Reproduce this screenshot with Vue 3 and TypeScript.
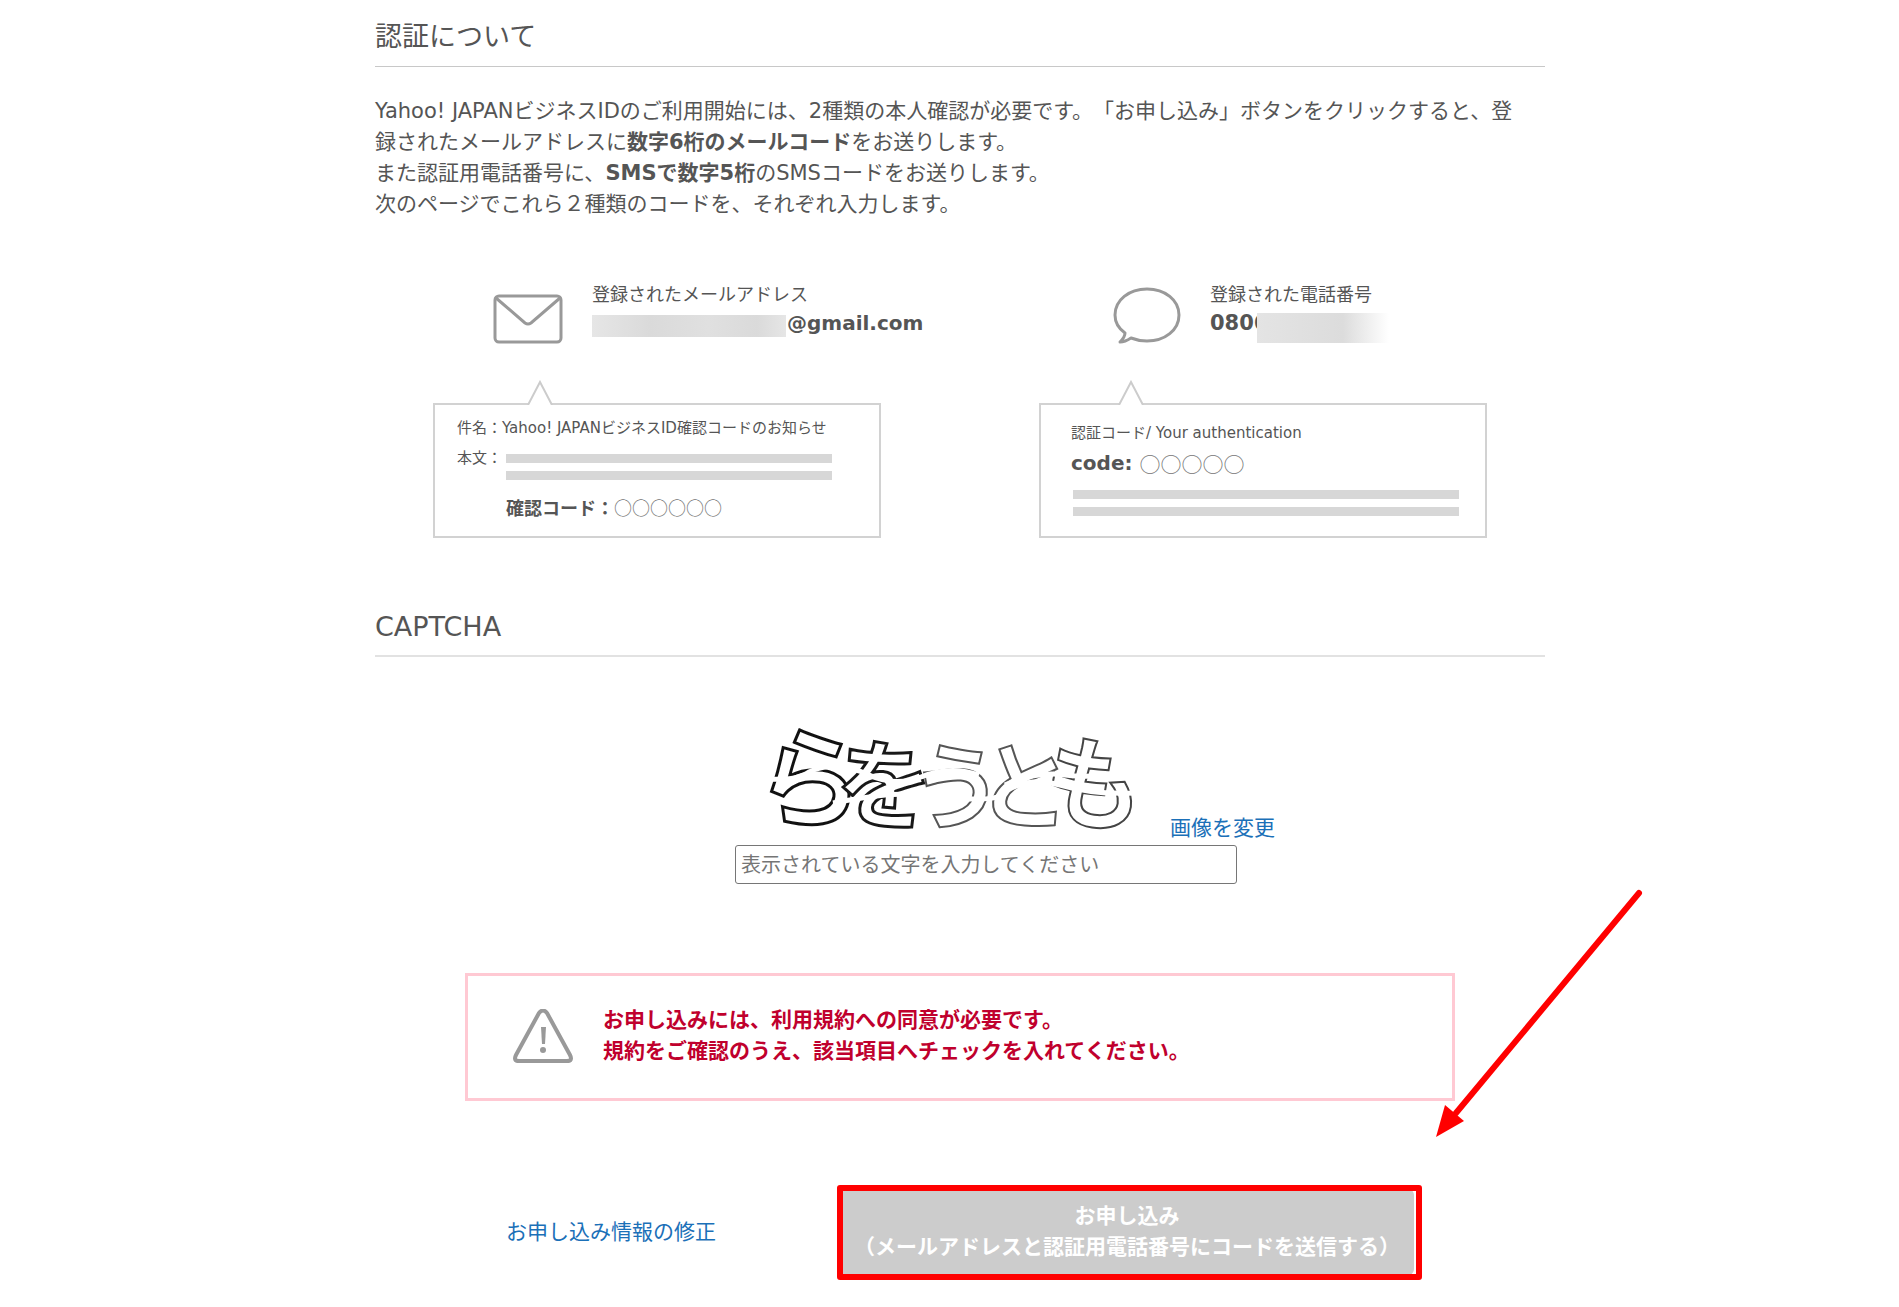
<script setup lang="ts">
import { ref } from 'vue'

const answer = ref('')
const emailDomain = '@gmail.com'
const phonePrefix = '080'
const emailDigits = 6
const smsDigits = 5

interface Glyph {
  char: string
  x: number
  y: number
  tilt: number
  line: number
  color: string
  size: number
}

const glyphs: Glyph[] = [
  { char: 'ら', x: 22, y: 98, tilt: 8, line: 3, color: '#111', size: 108 },
  { char: 'を', x: 102, y: 101, tilt: 5, line: 3, color: '#181818', size: 96 },
  { char: 'う', x: 175, y: 103, tilt: 4, line: 2, color: '#555', size: 94 },
  { char: 'と', x: 243, y: 102, tilt: 4, line: 2, color: '#555', size: 94 },
  { char: 'も', x: 310, y: 101, tilt: 8, line: 2, color: '#444', size: 100 },
]
</script>

<template>
  <main class="page">
    <section>
      <h2 class="title first">認証について</h2>
      <p class="lead">
        Yahoo! JAPANビジネスIDのご利用開始には、2種類の本人確認が必要です。「お申し込み」ボタンをクリックすると、登録されたメールアドレスに<strong>数字6桁のメールコード</strong>をお送りします。<br />
        また認証用電話番号に、<strong>SMSで数字5桁</strong>のSMSコードをお送りします。<br />
        次のページでこれら２種類のコードを、それぞれ入力します。
      </p>

      <div class="methods">
        <div class="method">
          <div class="contact mail">
            <svg class="icon" width="70" height="50" viewBox="0 0 70 50" fill="none" stroke="#999" stroke-width="3" aria-hidden="true">
              <rect x="2" y="2" width="66" height="46" rx="4" />
              <path d="M3 4 L32 29 Q35 31 38 29 L67 4" />
            </svg>
            <dl class="info">
              <dt>登録されたメールアドレス</dt>
              <dd><span class="mask mail-mask"></span>{{ emailDomain }}</dd>
            </dl>
          </div>
          <div class="callout mail-callout">
            <svg class="peak" width="26" height="25" viewBox="0 0 26 25" aria-hidden="true">
              <path d="M1 25 L13 2 L25 25" fill="#fff" stroke="#ccc" stroke-width="2" />
            </svg>
            <div class="row">件名：Yahoo! JAPANビジネスID確認コードのお知らせ</div>
            <div class="row body-row">
              <span>本文：</span>
              <div class="bars"><i></i><i></i></div>
            </div>
            <div class="mail-code"><b>確認コード：</b><span class="circles">{{ '○'.repeat(emailDigits) }}</span></div>
          </div>
        </div>

        <div class="method">
          <div class="contact phone">
            <svg class="icon" width="68" height="58" viewBox="0 0 68 58" fill="none" stroke="#999" stroke-width="3" stroke-linejoin="round" aria-hidden="true">
              <path d="M12 46 C5 41 2 34 2 28 C2 13 16 2 34 2 C52 2 66 13 66 28 C66 43 52 54 34 54 C28 54 23 53 18 51 C15 53 11 55 7 55 C10 52 12 50 12 46 Z" />
            </svg>
            <dl class="info">
              <dt>登録された電話番号</dt>
              <dd class="phone-value">{{ phonePrefix }}6<span class="mask phone-mask"></span></dd>
            </dl>
          </div>
          <div class="callout phone-callout">
            <svg class="peak" width="26" height="25" viewBox="0 0 26 25" aria-hidden="true">
              <path d="M1 25 L13 2 L25 25" fill="#fff" stroke="#ccc" stroke-width="2" />
            </svg>
            <div class="row">認証コード/ Your authentication</div>
            <div class="sms-code"><b>code:</b><span class="circles">{{ '○'.repeat(smsDigits) }}</span></div>
            <div class="bars"><i></i><i></i></div>
          </div>
        </div>
      </div>
    </section>

    <section>
      <h2 class="title second">CAPTCHA</h2>
      <div class="captcha">
        <div class="captcha-row">
          <svg class="captcha-image" width="435" height="125" viewBox="0 0 435 125" role="img" aria-label="CAPTCHA">
            <g class="captcha-text">
              <text
                v-for="g in glyphs"
                :key="g.char"
                :x="g.x"
                :y="g.y"
                :font-size="g.size"
                :stroke="g.color"
                :stroke-width="g.line"
                :transform="`rotate(${g.tilt} ${g.x + 40} ${g.y - 40})`"
              >{{ g.char }}</text>
            </g>
            <g fill="none" stroke="#fff" stroke-width="5">
              <path d="M30 60 Q62 62 74 53 Q100 40 134 56 Q160 68 186 58 Q215 46 244 56" />
              <path d="M98 84 Q130 78 150 76 T210 78 T262 78 Q290 56 325 66 T400 74" />
              <path d="M270 66 Q300 52 330 56 T392 52" />
            </g>
          </svg>
          <a class="link" href="#">画像を変更</a>
        </div>
        <input v-model="answer" class="answer" type="text" aria-label="表示されている文字" placeholder="表示されている文字を入力してください" />
      </div>
    </section>

    <div class="notice">
      <svg width="60" height="54" viewBox="0 0 60 54" aria-hidden="true">
        <path d="M26 4 Q30 -1 34 4 L57 46 Q60 52 54 52 H6 Q0 52 3 46 Z" fill="none" stroke="#999" stroke-width="4" stroke-linejoin="round" />
        <path d="M28 18 H33 L32 35 H29 Z" fill="#999" />
        <circle cx="30" cy="41" r="3" fill="#999" />
      </svg>
      <p>お申し込みには、利用規約への同意が必要です。<br />規約をご確認のうえ、該当項目へチェックを入れてください。</p>
      <svg class="arrow" width="210" height="252" viewBox="0 0 210 252" aria-hidden="true">
        <path d="M205 6 L22 226" stroke="#f00" stroke-width="6" stroke-linecap="round" />
        <path d="M2 250 L11 218 L30 234 Z" fill="#f00" />
      </svg>
    </div>

    <div class="actions">
      <a class="link" href="#">お申し込み情報の修正</a>
      <div class="submit-area">
        <button class="submit" type="button">お申し込み<br />（メールアドレスと認証用電話番号にコードを送信する）</button>
      </div>
    </div>
  </main>
</template>

<style>
body {
  margin: 0;
  background: #fff;
}
</style>

<style scoped>
.page {
  box-sizing: border-box;
  max-width: 1191px;
  margin: 0 auto;
  padding: 18px 0 32px 21px;
  color: #555;
  font: 400 21px/31px "DejaVu Sans", "Noto Sans CJK JP", sans-serif;
  text-spacing-trim: space-all;
}
strong,
b {
  font-weight: 700;
}
.title {
  margin: 0;
  font-size: 27px;
  font-weight: 400;
  line-height: 38px;
}
.title.first {
  padding-bottom: 10px;
  border-bottom: 1px solid #c8c8c8;
}
.title.second {
  margin-top: 70px;
  padding-bottom: 9px;
  border-bottom: 2px solid #e2e2e2;
}
.lead {
  margin: 29px 0 60px;
  padding-right: 24px;
}
.methods {
  display: flex;
  justify-content: space-between;
  padding: 0 58px;
}
.method {
  width: 448px;
}
.contact {
  display: flex;
  height: 58px;
}
.mail {
  padding-left: 60px;
}
.phone {
  padding-left: 74px;
}
.icon {
  flex: none;
}
.mail .icon {
  margin: 14px 29px 0 0;
}
.phone .icon {
  margin: 7px 29px 0 0;
}
.info {
  margin: 0;
  line-height: 29px;
  white-space: nowrap;
}
.info dt {
  font-size: 18px;
}
.info dd {
  display: flex;
  align-items: center;
  height: 29px;
  margin: 0;
  font-size: 20px;
  font-weight: 700;
}
.info .phone-value {
  font-size: 21px;
}
.mask {
  height: 22px;
  margin-top: 4px;
  background: linear-gradient(90deg, #e6e6e6, #dadada 30%, #e0e0e0 60%, #dadada 85%, #e6e6e6);
}
.mail-mask {
  width: 194px;
  margin-right: 1px;
}
.phone-mask {
  width: 132px;
  height: 30px;
  margin: 8px 0 0 -11px;
  background: linear-gradient(90deg, #e4e4e4, #dcdcdc 65%, #fff);
}
.callout {
  position: relative;
  box-sizing: border-box;
  height: 135px;
  margin-top: 65px;
  border: 2px solid #d2d2d2;
  font-size: 15px;
}
.mail-callout {
  padding: 8px 47px 0 22px;
}
.phone-callout {
  padding: 13px 26px 0 30px;
}
.peak {
  position: absolute;
  top: -25px;
}
.mail-callout .peak {
  left: 92px;
}
.phone-callout .peak {
  left: 77px;
}
.row {
  line-height: 30px;
  white-space: nowrap;
}
.body-row {
  display: flex;
  line-height: 31px;
}
.bars {
  flex: 1;
  display: grid;
  gap: 8px;
}
.bars i {
  height: 9px;
  background: #d7d7d7;
}
.body-row .bars {
  margin: 11px 0 0 4px;
}
.phone-callout .bars {
  margin: 11px 0 0 2px;
}
.mail-code {
  margin: 12px 0 0 49px;
  font-size: 18px;
  line-height: 30px;
}
.sms-code {
  display: flex;
  gap: 7px;
  font-size: 21px;
  line-height: 31px;
}
.sms-code b {
  font-size: 20px;
}
.circles {
  color: #777;
  font-family: "Noto Sans CJK JP", sans-serif;
}
.captcha {
  width: 560px;
  margin: 62px 0 0 360px;
}
.captcha-row {
  display: flex;
  align-items: flex-end;
}
.captcha-image {
  overflow: visible;
}
.captcha-text {
  fill: #fff;
  font-family: "Noto Sans CJK JP", sans-serif;
  font-weight: 700;
}
.link {
  color: #1b70b8;
  text-decoration: none;
}
.answer {
  display: block;
  box-sizing: border-box;
  width: 502px;
  height: 39px;
  margin-top: 1px;
  padding: 0 5px;
  border: 1px solid #767676;
  border-radius: 3px;
  color: #555;
  font: 400 20px/30px "DejaVu Sans", "Noto Sans CJK JP", sans-serif;
}
.answer::placeholder {
  color: #757575;
}
.notice {
  position: relative;
  display: flex;
  align-items: center;
  gap: 30px;
  margin: 89px 90px 0;
  padding: 29px 45px 31px;
  border: 3px solid #ffc9d3;
}
.notice p {
  margin: 0;
  color: #c0002d;
  font-weight: 700;
}
.arrow {
  position: absolute;
  top: -89px;
  right: -192px;
}
.actions {
  display: flex;
  align-items: center;
  justify-content: space-between;
  margin-top: 88px;
  padding: 0 131px;
}
.submit-area {
  position: relative;
  width: 574px;
}
.submit-area::after {
  content: "";
  position: absolute;
  inset: -4px -8px -5px -3px;
  border: 6px solid #f00;
  border-radius: 3px;
  pointer-events: none;
}
.submit {
  display: block;
  width: 100%;
  height: 86px;
  padding: 0;
  border: 0;
  border-radius: 6px;
  background: #ccc;
  color: #fff;
  font: 700 21px/31px "DejaVu Sans", "Noto Sans CJK JP", sans-serif;
  white-space: nowrap;
}
</style>
